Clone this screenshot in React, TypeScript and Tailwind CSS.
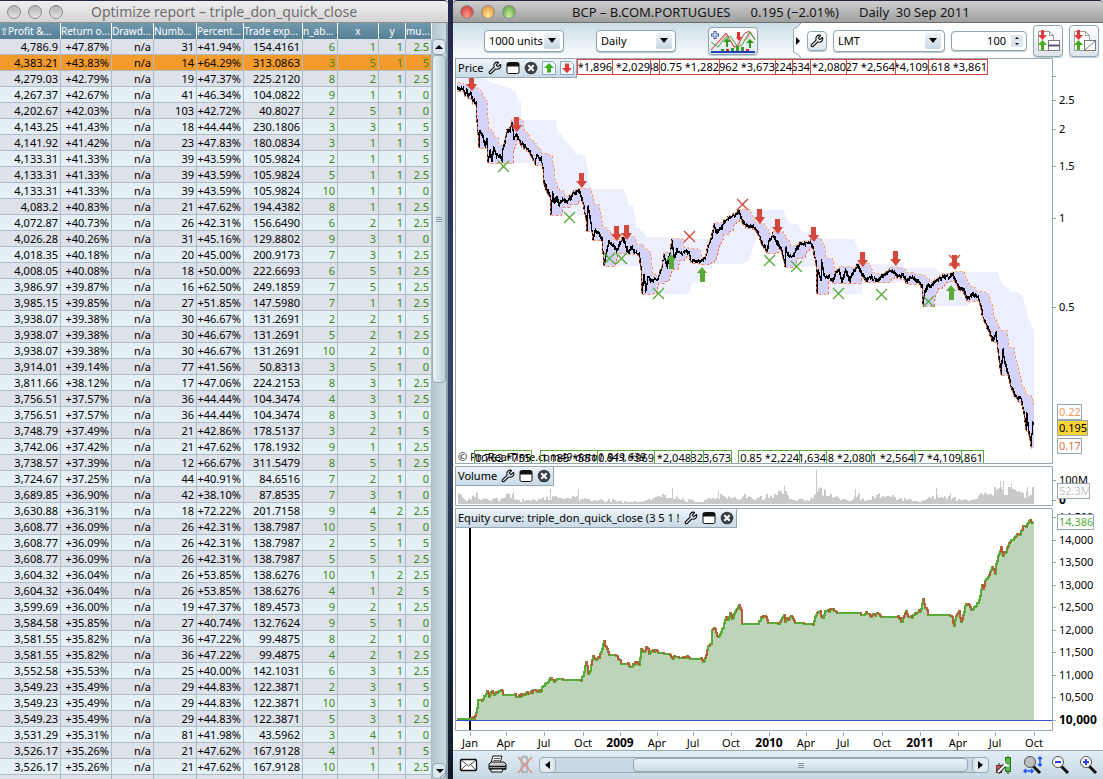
import type { ReactNode } from "react";
import { Wrench } from "lucide-react";

type Point = [number, number];

const COLUMNS = [
  { label: "⇧Profit &...", width: "w-[61px]", header: "text-left" },
  { label: "Return o...", width: "w-[51px]", header: "text-left" },
  { label: "Drawd...", width: "w-[42px]", header: "text-left" },
  { label: "Numb...", width: "w-[43px]", header: "text-left" },
  { label: "Percent...", width: "w-[47px]", header: "text-left" },
  { label: "Trade exp...", width: "w-[59px]", header: "text-left" },
  { label: "n_ab...", width: "w-[35px]", header: "text-left" },
  { label: "x", width: "w-[41px]", header: "text-center" },
  { label: "y", width: "w-[27px]", header: "text-center" },
  { label: "mu...", width: "w-[26px]", header: "text-left" },
];

// profit, return %, trades, winning %, expectancy, n_ab, x, y, mult
const REPORT = `4,786.9 47.87 31 41.94 154.4161 6 1 1 2.5
4,383.21 43.83 14 64.29 313.0863 3 5 1 5
4,279.03 42.79 19 47.37 225.2120 8 2 1 2.5
4,267.37 42.67 41 46.34 104.0822 9 1 1 0
4,202.67 42.03 103 42.72 40.8027 2 5 1 0
4,143.25 41.43 18 44.44 230.1806 3 3 1 5
4,141.92 41.42 23 47.83 180.0834 3 1 1 5
4,133.31 41.33 39 43.59 105.9824 2 1 1 5
4,133.31 41.33 39 43.59 105.9824 5 1 1 2.5
4,133.31 41.33 39 43.59 105.9824 10 1 1 0
4,083.2 40.83 21 47.62 194.4382 8 1 1 2.5
4,072.87 40.73 26 42.31 156.6490 6 2 1 2.5
4,026.28 40.26 31 45.16 129.8802 9 3 1 0
4,018.35 40.18 20 45.00 200.9173 7 3 1 2.5
4,008.05 40.08 18 50.00 222.6693 6 5 1 2.5
3,986.97 39.87 16 62.50 249.1859 7 5 1 2.5
3,985.15 39.85 27 51.85 147.5980 7 1 1 2.5
3,938.07 39.38 30 46.67 131.2691 2 2 1 5
3,938.07 39.38 30 46.67 131.2691 5 2 1 2.5
3,938.07 39.38 30 46.67 131.2691 10 2 1 0
3,914.01 39.14 77 41.56 50.8313 3 5 1 0
3,811.66 38.12 17 47.06 224.2153 8 3 1 2.5
3,756.51 37.57 36 44.44 104.3474 4 3 1 2.5
3,756.51 37.57 36 44.44 104.3474 8 3 1 0
3,748.79 37.49 21 42.86 178.5137 3 2 1 5
3,742.06 37.42 21 47.62 178.1932 9 1 1 2.5
3,738.57 37.39 12 66.67 311.5479 8 5 1 2.5
3,724.67 37.25 44 40.91 84.6516 7 2 1 0
3,689.85 36.90 42 38.10 87.8535 7 3 1 0
3,630.88 36.31 18 72.22 201.7158 9 4 2 2.5
3,608.77 36.09 26 42.31 138.7987 10 5 1 0
3,608.77 36.09 26 42.31 138.7987 2 5 1 5
3,608.77 36.09 26 42.31 138.7987 5 5 1 2.5
3,604.32 36.04 26 53.85 138.6276 10 1 2 2.5
3,604.32 36.04 26 53.85 138.6276 4 1 2 5
3,599.69 36.00 19 47.37 189.4573 9 2 1 2.5
3,584.58 35.85 27 40.74 132.7624 9 5 1 0
3,581.55 35.82 36 47.22 99.4875 8 2 1 0
3,581.55 35.82 36 47.22 99.4875 4 2 1 2.5
3,552.58 35.53 25 40.00 142.1031 6 3 1 2.5
3,549.23 35.49 29 44.83 122.3871 2 3 1 5
3,549.23 35.49 29 44.83 122.3871 10 3 1 0
3,549.23 35.49 29 44.83 122.3871 5 3 1 2.5
3,531.29 35.31 81 41.98 43.5962 3 4 1 0
3,526.17 35.26 21 47.62 167.9128 4 1 1 5
3,526.17 35.26 21 47.62 167.9128 10 1 1 2.5
3,517.28 35.18 28 38.57 125.1484 8 1 1 5`
  .split("\n")
  .map((line) => {
    const [profit, ret, trades, win, exp, ...vars] = line.split(" ");
    return [profit, `+${ret}%`, "n/a", trades, `+${win}%`, exp, ...vars];
  });

const parse = (text: string): Point[] =>
  text
    .trim()
    .split(/\s+/)
    .map((pair) => pair.split(",").map(Number) as Point);

const PRICE = parse(`
410,75 440,79 447,83 457,88 460,89 463,87 465,94 467,90 468,95 471,93 473,100 476,103 477,120 478,132 479,145
480,131 483,137 485,145 487,140 488,161 490,151 492,160 494,148 497,155 500,155 502,160 503,148 505,141 507,132
510,130 512,122 514,138 516,135 520,141 525,146 530,152 535,162 537,155 541,158 543,167 544,181 547,190 550,195
551,212 552,200 553,193 554,202 557,197 559,203 563,199 567,201 570,198 573,193 575,193 579,190 582,198 584,207
586,217 587,230 588,206 591,222 593,237 595,230 598,232 602,239 603,252 604,264 607,250 609,242 613,245 617,250
620,243 623,237 625,242 628,252 632,247 635,252 639,253 641,267 642,290 644,274 646,290 648,277 652,280 655,279
658,278 662,267 664,255 667,265 670,253 672,240 674,257 677,250 680,252 685,252 689,251 691,261 695,261 700,260
705,258 708,246 712,236 714,225 717,232 722,227 725,220 730,217 735,214 739,211 742,219 745,225 750,225 755,228
758,233 762,243 765,247 767,250 769,242 773,234 776,240 781,248 784,259 785,265 786,248 789,256 793,256 796,250
800,243 805,243 810,241 813,247 816,262 817,291 818,270 821,280 822,262 824,275 828,276 833,280 836,273 839,269
842,280 846,270 850,280 854,270 858,265 861,272 866,279 871,277 878,280 883,275 890,270 895,273 900,276 903,273
906,281 911,277 918,280 922,286 923,303 925,292 928,284 931,286 936,280 943,277 950,276 953,274 956,282 960,288
963,287 967,299 973,293 978,297 981,307 983,317 986,323 990,333 993,339 996,333 998,350 1001,373 1003,350 1005,363
1008,373 1011,385 1015,395 1018,398 1021,397 1024,413 1026,428 1027,413 1029,432 1031,445 1033,422`);

const EQUITY = parse(`
457,719 471,719 475,717 477,707 478,700 482,700 485,695 487,691 489,696 492,690 494,695 497,692 501,690 503,695
515,695 518,697 522,695 528,693 535,691 540,692 545,683 548,681 550,678 553,681 558,679 567,680 581,680 583,677
586,662 588,673 590,670 593,657 597,660 599,657 602,648 604,642 607,649 609,655 615,655 618,658 622,664 628,664
631,667 635,663 639,664 641,649 643,653 647,647 649,653 653,650 658,653 670,654 672,659 675,657 683,658 687,656
690,659 701,659 704,662 706,655 708,647 711,643 712,630 714,627 717,636 720,635 723,627 726,618 728,620 730,613
732,619 735,613 737,609 739,606 741,610 742,624 758,624 761,618 763,617 765,616 768,623 778,623 780,622 784,616
785,621 791,617 795,623 813,624 816,615 820,611 822,619 825,612 828,611 833,608 837,613 860,613 862,616 866,613
870,616 879,613 881,617 898,617 902,622 906,610 908,617 911,617 916,613 921,610 923,598 925,608 926,607 928,615
950,615 952,617 954,627 956,615 959,612 961,623 963,616 965,605 968,603 971,610 975,607 979,600 980,595 982,584
983,590 985,582 990,572 992,568 995,573 996,563 999,553 1001,547 1003,555 1006,551 1009,543 1015,537 1018,534
1020,536 1023,526 1026,526 1030,519 1032,523 1034,523`);

const VOLUME = parse(`
458,9 465,4 470,5 476,9 479,7 486,4 500,5 510,9 514,8 517,4 530,4 542,5 552,7 560,5 572,8 580,5 590,4 600,4 612,4
620,2 640,2 648,4 656,7 664,8 676,7 686,4 700,2 706,4 716,8 722,7 732,5 745,7 755,5 765,7 775,9 785,12 789,4 810,4
818,16 826,9 836,6 850,4 858,8 866,4 880,8 890,8 900,5 910,4 916,2 921,3 926,7 944,7 955,5 972,3 980,8 990,10
1000,15 1012,12 1024,9 1034,14`);

const VOLUME_SPIKES: Record<number, number> = {
  477: 11, 513: 12, 550: 15, 578: 15, 672: 16, 718: 13, 784: 18, 816: 35,
  855: 15, 936: 16, 950: 11, 1000: 23, 1003: 23, 1011: 20, 1027: 17,
};

function valueAt(points: Point[], x: number) {
  const i = points.findIndex((p) => p[0] >= x);
  if (i <= 0) return points[i === 0 ? 0 : points.length - 1][1];
  const [x0, y0] = points[i - 1];
  const [x1, y1] = points[i];
  return y0 + ((y1 - y0) * (x - x0)) / (x1 - x0);
}

function noise(n: number) {
  const v = Math.sin(n * 127.1 + 11.7) * 43758.5453;
  return v - Math.floor(v);
}

const FIRST = 410;
const BARS = Array.from({ length: 1034 - FIRST }, (_, i) => {
  const x = FIRST + i;
  const a = valueAt(PRICE, x);
  const b = valueAt(PRICE, x + 1);
  const drift = (noise(x + 300) - 0.5) * 2;
  return {
    x,
    high: Math.round(Math.min(a, b) + drift - noise(x) * 2),
    low: Math.round(Math.max(a, b) + drift + 1 + noise(x + 900) * 2),
  };
});

function channel(period: number) {
  return BARS.slice(457 - FIRST).map((bar) => {
    const span = BARS.filter((b) => b.x > bar.x - period && b.x <= bar.x);
    return {
      x: bar.x,
      top: Math.min(...span.map((b) => b.high)),
      bottom: Math.max(...span.map((b) => b.low)),
    };
  });
}

const INNER = channel(11);
const OUTER = channel(45);

function stepLine(points: Point[]) {
  return points.map(([x, y], i) => (i ? `H${x}V${y}` : `M${x} ${y}`)).join("");
}

function area(rows: { x: number; top: number; bottom: number }[]) {
  return rows.map((r) => `M${r.x} ${r.top}h1V${r.bottom}h-1z`).join("");
}

const EQUITY_STEPS: Point[] = Array.from({ length: 578 }, (_, i) => {
  const x = 457 + i;
  const slope = Math.abs(valueAt(EQUITY, x + 1) - valueAt(EQUITY, x));
  const jitter = slope > 0.2 ? (noise(x) - 0.5) * 3 : 0;
  return [x, Math.round(valueAt(EQUITY, x) + jitter)];
});

const RED = "#d4473a";
const GREEN = "#58ab36";
const AXIS = "#98a8b2";
const CHART_FONT = "Noto Sans, Open Sans, sans-serif";

function Arrow({ x, y, up = false }: { x: number; y: number; up?: boolean }) {
  const d = up
    ? "M0 0l5 6h-2v9h-5v-9h-3z"
    : "M-2 0h5v8h3l-5 7l-6-7h3z";
  return <path d={d} transform={`translate(${x} ${y})`} fill={up ? GREEN : RED} />;
}

function Cross({ x, y, color }: { x: number; y: number; color: string }) {
  return (
    <path
      d={`M${x - 5} ${y - 5}l11 11m0-11l-11 11`}
      stroke={color}
      strokeWidth="1.4"
      fill="none"
    />
  );
}

// Boxed level label, cut off on the left when its text is too long
function Level({ x, y, w, h, text, color }: { x: number; y: number; w: number; h: number; text: string; color: string }) {
  return (
    <svg x={x} y={y} width={w} height={h}>
      <text x={w - 1} y={12} textAnchor="end" fontSize="11">
        {text}
      </text>
      <rect x="0.5" y="0.5" width={w - 1} height={h - 1} fill="none" stroke={color} />
    </svg>
  );
}

function AxisLabel({ y, text, bold = false }: { y: number; text: string; bold?: boolean }) {
  return (
    <>
      <path d={`M1052 ${y}.5h4`} stroke={AXIS} />
      <text x="1059" y={y + 4} fontSize={bold ? 12 : 11} fontWeight={bold ? 700 : 400}>
        {text}
      </text>
    </>
  );
}

function AxisTag({ y, w, text, color, fill = "#fff" }: { y: number; w: number; text: string; color: string; fill?: string }) {
  return (
    <>
      <rect x="1057.5" y={y + 0.5} width={w} height="15" fill={fill} stroke={AXIS} />
      <text x="1059" y={y + 12} fontSize="11" fill={color}>
        {text}
      </text>
    </>
  );
}

const TOP_LEVELS: [number, number, string][] = [
  [577, 36, "*1,896"], [612, 39, "*2,029"], [650, 10, "48"], [659, 61, "0.75 *1,282"],
  [719, 57, "962 *3,673"], [775, 18, "224"], [792, 19, "634"], [810, 37, "*2,080"],
  [846, 50, "27 *2,564"], [895, 34, "*4,109"], [928, 60, ".618 *3,861"],
];

const BOTTOM_LEVELS: [number, number, string][] = [
  [474, 58, "0.762 *755"], [540, 58, "1.185 *551"], [597, 58, "0.911 *969"], [654, 38, "*2,048"],
  [691, 13, "32"], [703, 29, "3,673"], [738, 62, "0.85 *2,224"], [799, 28, "1,634"],
  [826, 46, "58 *2,080"], [871, 44, "1 *2,564"], [914, 48, "17 *4,109"], [961, 23, ",861"],
];

function PriceChart() {
  return (
    <svg viewBox="455 58 648 406" className="block w-full" fontFamily={CHART_FONT}>
      <rect x="455" y="58" width="648" height="406" fill="#fff" />
      <path d={area(OUTER)} fill="#eeeffe" shapeRendering="crispEdges" />
      <path d={area(INNER)} fill="#d2d2fb" shapeRendering="crispEdges" />
      <path
        d={BARS.slice(457 - FIRST)
          .map((b) => `M${b.x} ${b.high}h1V${b.low}h-1z`)
          .join("")}
        fill="#000"
        shapeRendering="crispEdges"
      />
      <path
        d={stepLine(INNER.map((r) => [r.x, r.top]))}
        fill="none"
        stroke="#f09a62"
        strokeDasharray="3 2"
        transform="translate(0.5 -0.5)"
      />
      <path
        d={stepLine(INNER.map((r) => [r.x, r.bottom]))}
        fill="none"
        stroke="#ec6c40"
        strokeDasharray="3 2"
        transform="translate(0.5 0.5)"
      />
      {parse("471,76 516,117 581,173 616,226 626,225 759,209 777,219 813,227 862,252 895,251 954,255").map(([x, y]) => (
        <Arrow key={x} x={x} y={y} />
      ))}
      {parse("671,254 702,267 951,285").map(([x, y]) => (
        <Arrow key={x} x={x} y={y} up />
      ))}
      {parse("503,166 569,217 609,258 621,258 658,293 769,260 796,266 838,293 881,294 928,301").map(([x, y]) => (
        <Cross key={x} x={x} y={y} color={GREEN} />
      ))}
      {parse("689,236 742,204 954,260").map(([x, y]) => (
        <Cross key={x} x={x} y={y} color={RED} />
      ))}
      {TOP_LEVELS.map(([x, w, text]) => (
        <Level key={x} x={x} y={59} w={w} h={16} text={text} color={RED} />
      ))}
      <text x="458" y="461" fontSize="11">
        © ProRealTime.com
      </text>
      <text x="560" y="461" fontSize="11" fontStyle="italic">
        49 data1 849,639
      </text>
      {BOTTOM_LEVELS.map(([x, w, text]) => (
        <Level key={x} x={x} y={450} w={w} h={14} text={text} color={GREEN} />
      ))}
      <path d="M455.5 58.5H1052.5V463.5H455.5z" fill="none" stroke={AXIS} />
      <path d="M1052 76.5h4" stroke={AXIS} />
      <AxisLabel y={100} text="2.5" />
      <AxisLabel y={129} text="2" />
      <AxisLabel y={166} text="1.5" />
      <AxisLabel y={218} text="1" />
      <AxisLabel y={307} text="0.5" />
      <AxisTag y={404} w={24} text="0.22" color="#f09a62" />
      <AxisTag y={438} w={24} text="0.17" color="#ec6c40" />
      <AxisTag y={420} w={30} text="0.195" color="#000" fill="#fbd535" />
    </svg>
  );
}

function VolumeChart() {
  const bars = Array.from({ length: 576 }, (_, i) => {
    const x = 458 + i;
    const base = valueAt(VOLUME, x);
    return [x, Math.round(VOLUME_SPIKES[x] ?? base * (0.6 + noise(Math.floor(x / 2)) * 0.8))];
  });
  return (
    <svg viewBox="455 466 648 40" className="block w-full" fontFamily={CHART_FONT}>
      <rect x="455" y="466" width="648" height="40" fill="#fff" />
      <path
        d={bars.map(([x, h]) => `M${x} 504v-${h}h1v${h}z`).join("")}
        fill="#c9c9c9"
        shapeRendering="crispEdges"
      />
      <path d="M455.5 466.5H1052.5V505.5H455.5z" fill="none" stroke={AXIS} />
      <AxisLabel y={480} text="100M" />
      <AxisLabel y={500} text="0" bold />
      <AxisTag y={483} w={32} text="52.3M" color="#c4c4c4" />
    </svg>
  );
}

const EQUITY_LABELS: [number, string][] = [
  [517, "14,500"], [540, "14,000"], [562, "13,500"], [585, "13,000"], [607, "12,500"],
  [630, "12,000"], [652, "11,500"], [675, "11,000"], [697, "10,500"],
];

const MONTHS: [number, string][] = [
  [470, "Jan"], [506, "Apr"], [544, "Jul"], [583, "Oct"], [620, "2009"], [657, "Apr"],
  [693, "Jul"], [731, "Oct"], [769, "2010"], [806, "Apr"], [843, "Jul"], [882, "Oct"],
  [920, "2011"], [958, "Apr"], [995, "Jul"], [1034, "Oct"],
];

function EquityChart() {
  const fill = `${stepLine(EQUITY_STEPS)}V720H457z`;
  const losing = EQUITY_STEPS.slice(1)
    .map(([x, y], i) => {
      const prev = EQUITY_STEPS[i][1];
      return y > prev || (y !== prev && noise(x + 40) > 0.85) ? `M${x - 1} ${prev}H${x}V${y}` : "";
    })
    .join("");
  return (
    <svg viewBox="455 508 648 242" className="block w-full" fontFamily={CHART_FONT}>
      <rect x="455" y="508" width="648" height="242" fill="#fff" />
      <path d={fill} fill="#bcd4b8" />
      <path d="M470 527V730" stroke="#000" strokeWidth="2" />
      <path d={stepLine(EQUITY_STEPS)} fill="none" stroke={GREEN} strokeWidth="2" />
      <path d={losing} fill="none" stroke={RED} strokeWidth="1.5" />
      <path d="M456 720.5H1052" stroke="#2f4fc8" />
      <path d="M455.5 508.5H1052.5V730.5H455.5z" fill="none" stroke={AXIS} />
      {EQUITY_LABELS.map(([y, text]) => (
        <AxisLabel key={y} y={y} text={text} />
      ))}
      <AxisLabel y={720} text="10,000" bold />
      <AxisTag y={514} w={36} text="14,386" color={GREEN} />
      {MONTHS.map(([x, text]) => {
        const year = text.startsWith("20");
        return (
          <g key={x}>
            <path d={`M${x}.5 732v4`} stroke={AXIS} />
            <text x={x} y="747" textAnchor="middle" fontSize={year ? 12 : 11} fontWeight={year ? 700 : 400}>
              {text}
            </text>
          </g>
        );
      })}
    </svg>
  );
}

function WindowIcon() {
  return (
    <svg width="14" height="14" viewBox="0 0 14 14">
      <rect x="1" y="1.5" width="12" height="11" rx="1.5" fill="#fff" stroke="#111" />
      <path d="M1 2h12v3.5H1z" fill="#111" />
    </svg>
  );
}

function CloseIcon() {
  return (
    <svg width="14" height="14" viewBox="0 0 14 14">
      <circle cx="7" cy="7" r="6.3" fill="#3a3f44" />
      <path d="M4.3 4.3l5.4 5.4m0-5.4l-5.4 5.4" stroke="#fff" strokeWidth="2" />
    </svg>
  );
}

function PageArrowIcon({ up }: { up?: boolean }) {
  return (
    <svg width="14" height="14" viewBox="0 0 14 14">
      <path d="M.5.5h10l3 3v10H.5z" fill="#f4f9fd" stroke="#86a8be" />
      {up ? (
        <path d="M7 2l5 5H9v4.500H5V7H2z" fill="#3fae1e" />
      ) : (
        <path d="M7 12l5-5H9V2.500H5V7H2z" fill="#e23a36" />
      )}
    </svg>
  );
}

function PanelHeader({ title, children }: { title: string; children?: ReactNode }) {
  return (
    <div className="absolute top-0 left-0 flex h-5 items-center gap-1 border border-[#98a8b2] bg-linear-to-b from-[#eef5fa] to-[#c9dae6] px-0.5 text-[11px] leading-4">
      <span className="whitespace-nowrap">{title}</span>
      <button aria-label={`${title} settings`}>
        <Wrench size={14} strokeWidth={1.8} />
      </button>
      <button aria-label={`Detach ${title}`}>
        <WindowIcon />
      </button>
      <button aria-label={`Close ${title}`}>
        <CloseIcon />
      </button>
      {children}
    </div>
  );
}

function TrafficLights({ active = false }: { active?: boolean }) {
  const colors = active
    ? [
        "bg-radial-[at_50%_80%] from-[#ff9c90] to-[#c2292a]",
        "bg-radial-[at_50%_80%] from-[#ffe9a0] to-[#e08a24]",
        "bg-radial-[at_50%_80%] from-[#cdf0a0] to-[#4d9630]",
      ]
    : [
        "bg-linear-to-b from-[#b4b4b4] to-[#e2e2e2]",
        "bg-linear-to-b from-[#b4b4b4] to-[#e2e2e2]",
        "bg-linear-to-b from-[#b4b4b4] to-[#e2e2e2]",
      ];
  return (
    <div className="flex gap-[7px] pl-[7px]">
      {["Close", "Minimize", "Zoom"].map((name, i) => (
        <button
          key={name}
          aria-label={name}
          className={`size-3.5 rounded-full border border-[#8c8c8c] ${colors[i]}`}
        />
      ))}
    </div>
  );
}

function ReportWindow() {
  return (
    <section className="flex min-w-0 flex-[448] flex-col overflow-hidden bg-white font-['Noto_Sans',sans-serif]">
      <header className="flex h-[23px] shrink-0 items-center gap-7 rounded-tr border-t border-t-[#23264a] border-b border-b-[#8e8e8e] bg-linear-to-b from-[#efefef] to-[#d4d4d4]">
        <TrafficLights />
        <h1 className="truncate text-[14px] leading-5 text-[#6e6e6e]">Optimize report – triple_don_quick_close</h1>
      </header>
      <div className="flex min-h-0 flex-1">
        <div className="min-w-0 flex-1 overflow-hidden">
          <table className="w-full table-fixed border-separate border-spacing-0 text-[11px]">
            <colgroup>
              {COLUMNS.map((c) => (
                <col key={c.label} className={c.width} />
              ))}
            </colgroup>
            <thead>
              <tr className="bg-linear-to-b from-[#7199ae] to-[#557f95] text-[10px] text-white">
                {COLUMNS.map((c) => (
                  <th
                    key={c.label}
                    className={`h-4 border-r border-r-white p-0 leading-[14px] font-normal whitespace-nowrap ${c.header}`}
                  >
                    {c.label}
                  </th>
                ))}
              </tr>
            </thead>
            <tbody>
              {REPORT.map((row, r) => (
                <tr
                  key={r}
                  className={r === 1 ? "bg-[#f29a2c]" : r % 2 ? "bg-[#e4f0f6]" : "bg-[#dde1e9]"}
                >
                  {row.map((value, c) => (
                    <td
                      key={c}
                      className={`h-4 border-r border-b border-[#b0bcc5] p-0 pr-0.5 text-right leading-[14px] whitespace-nowrap ${c > 5 ? "text-[#3f8a14]" : "text-black"}`}
                    >
                      {value}
                    </td>
                  ))}
                </tr>
              ))}
            </tbody>
          </table>
        </div>
        <div className="flex w-4 shrink-0 flex-col border-r-2 border-[#8ea0ac] bg-linear-to-r from-[#b4c5cf] to-[#cddbe2] pt-4">
          <button aria-label="Scroll up" className="grid h-4 place-items-center rounded border border-[#98a8b2] bg-[#dce8ef]">
            <svg width="8" height="4" viewBox="0 0 8 4"><path d="M4 0l4 4H0z" /></svg>
          </button>
          <div className="grid flex-[328] place-items-center rounded border border-[#98a8b2] bg-linear-to-r from-[#eaf2f6] to-[#bfd0da]">
            <svg width="6" height="5" viewBox="0 0 6 5"><path d="M0 .5h6M0 2.500h6M0 4.500h6" stroke="#8797a2" /></svg>
          </div>
          <div className="flex-[382]" />
          <button aria-label="Scroll down" className="grid h-4 place-items-center rounded border border-[#98a8b2] bg-[#dce8ef]">
            <svg width="14" height="14" viewBox="0 0 14 14">
              <path d="M3 5h8l-4 4z" />
              <path d="M7 14l7-7M10 14l4-4" stroke="#7b8a94" />
            </svg>
          </button>
        </div>
      </div>
    </section>
  );
}

function Select({ label, value, grow = false }: { label: string; value: string; grow?: boolean }) {
  return (
    <label className={`relative block h-[22px] ${grow ? "w-28" : "w-20"}`}>
      <select
        aria-label={label}
        className="block h-full w-full appearance-none rounded border border-[#8fa5b2] bg-white pl-1 text-[11px] leading-4 shadow-[0_1px_1px_#b9c8d1]"
      >
        <option>{value}</option>
      </select>
      <span className="pointer-events-none absolute top-[3px] right-1 grid size-4 place-items-center rounded-xs bg-linear-to-b from-[#edf4f8] to-[#c8d9e3]">
        <svg width="8" height="5" viewBox="0 0 8 5"><path d="M0 0h8L4 5z" /></svg>
      </span>
    </label>
  );
}

function IndicatorsIcon() {
  return (
    <svg width="46" height="24" viewBox="0 0 46 24">
      <path d="M3 18L16 4l3 3-7 5zM20 9l5 9 6-5-2 6h-5zM32 13l6-10 4 0-3 7z" fill="#f3c4c4" />
      <path d="M1 21L16 4l8 14 4-2 6-11 5-3 6 8" fill="none" stroke="#cf3b3b" />
      <path d="M1 13l7 5 7-9 5-2 8 11 4-2 8-13 5 8" fill="none" stroke="#3fae3a" />
      <path d="M5 2v8M1 6h8" stroke="#3c66b8" strokeWidth="3" />
      <path d="M5 3v6M2 6h6" stroke="#fff" />
      <path d="M17 9l4 4h-3v5h-2v-5h-3zM40 10l4 4h-3v5h-2v-5h-3z" fill="#2e9c1c" />
      <path d="M27 3h3v5h2l-3 4-3-4h1z" fill="#e0302c" />
      <path d="M11 20h3v3h-3zM21 19h3v4h-3zM26 17h3v6h-3zM31 18h3v5h-3z" fill="#3a9b2a" />
      <path d="M16 20h3v3h-3zM36 20h3v3h-3z" fill="#c92f2f" />
      <path d="M1 23h44" stroke="#2340b8" strokeWidth="2" />
    </svg>
  );
}

function OrderIcon({ slash = false }: { slash?: boolean }) {
  return (
    <svg width="24" height="24" viewBox="0 0 24 24">
      <path d="M2.500 2.500h11l4 4v15h-15z" fill="#fff" stroke="#9a9a9a" />
      <path d="M13.500 2.500v4h4" fill="none" stroke="#9a9a9a" />
      <path d="M5 1h3v5h3l-4.500 5L2 6h3z" fill="#e23a36" />
      <path d="M6.500 11l4.500 5H8v5H5v-5H2z" fill="#3fae1e" />
      <rect x="12.500" y="11.500" width="11" height="10" fill="#fff" stroke="#777" />
      {slash ? <path d="M13 21l10-9" stroke="#777" /> : <path d="M12 16.500h11" stroke="#557" strokeWidth="2" />}
    </svg>
  );
}

const raised = "grid place-items-center rounded border border-[#8fa5b2] bg-linear-to-b from-white to-[#dde5ea] shadow-[0_1px_1px_#b9c8d1]";

function Toolbar() {
  return (
    <div className="flex h-[35px] items-stretch justify-between bg-linear-to-b from-[#ccdde6] to-[#fbfdfe]">
      <div className="flex items-center gap-8 pl-[31px]">
        <Select label="Displayed units" value="1000 units" />
        <Select label="Timeframe" value="Daily" />
        <button aria-label="Add indicator" className={`h-7 w-[50px] ${raised}`}>
          <IndicatorsIcon />
        </button>
      </div>
      <div className="flex items-center bg-linear-to-b">
        <svg width="8" height="35" viewBox="0 0 8 35">
          <path d="M8 0Q6 4 0 6v23q6 2 8 6z" fill="#fff" />
          <path d="M8 0Q6 4 .5 6v23q5.500 2 7.500 6" fill="none" stroke="#98a8b2" />
          <path d="M3 14v8l4-4z" />
        </svg>
        <div className="flex h-full items-center gap-1.5 bg-white pr-1 pl-1.5">
          <button aria-label="Trading settings" className={`size-5 ${raised}`}>
            <Wrench size={14} strokeWidth={1.8} />
          </button>
          <Select label="Order type" value="LMT" grow />
          <label className="relative block h-5 w-[76px]">
            <input
              aria-label="Quantity"
              defaultValue="100"
              className="block h-full w-full rounded border border-[#8fa5b2] bg-white pr-5 text-right text-[11px] shadow-[0_1px_1px_#b9c8d1]"
            />
            <svg width="12" height="12" viewBox="0 0 12 12" className="pointer-events-none absolute top-1 right-1">
              <rect width="12" height="12" fill="#dce7ee" />
              <path d="M4 4h4L6 2zM4 8h4l-2 2z" />
            </svg>
          </label>
          <button aria-label="Close position" className={`h-8 w-[30px] ${raised}`}>
            <OrderIcon />
          </button>
          <button aria-label="Cancel orders" className={`h-8 w-[30px] ${raised}`}>
            <OrderIcon slash />
          </button>
        </div>
      </div>
    </div>
  );
}

function MagnifierIcon({ sign }: { sign: "fit" | "-" | "+" }) {
  return (
    <svg width="20" height="20" viewBox="0 0 20 20">
      <path d="M10 11l7 7" stroke="#111" strokeWidth="3" />
      <circle cx="7" cy="7" r="5.500" fill={sign === "fit" ? "#bcbcbc" : "#fff"} stroke="#555" />
      {sign === "fit" ? (
        <path d="M17 2v8M15 4l2-2 2 2M15 9l2 2 2-2M1 16h8M3 14l-2 2 2 2M8 14l2 2-2 2" fill="none" stroke="#1f55f0" strokeWidth="1.500" />
      ) : (
        <path d={sign === "+" ? "M4 7h6M7 4v6" : "M4 7h6"} stroke="#1f3ff0" strokeWidth="2" />
      )}
    </svg>
  );
}

function StatusBar() {
  return (
    <footer className="flex min-h-[29px] items-center border-t border-[#98a8b2] bg-linear-to-b from-[#e2eef6] to-[#c6d7e2] pr-1 pl-1.5">
      <div className="flex gap-2 pr-1">
        <button aria-label="Send by mail">
          <svg width="20" height="20" viewBox="0 0 20 20">
            <rect x="1.500" y="4.500" width="16" height="11" rx="1" fill="#fff" stroke="#111" strokeWidth="1.300" />
            <path d="M2 5l7.500 6L17 5M2 15l5-5M17 15l-5-5" fill="none" stroke="#111" strokeWidth=".8" />
          </svg>
        </button>
        <button aria-label="Print">
          <svg width="20" height="20" viewBox="0 0 20 20">
            <path d="M6 1h9l-2 7H4z" fill="#fff" stroke="#111" />
            <path d="M7 3.500h6M6.500 5.500h6" stroke="#333" strokeWidth=".8" />
            <path d="M2 9l2-2h13l2 2v5H2z" fill="#ccc" stroke="#111" />
            <path d="M2 11.500h17M2 14h17" stroke="#111" strokeWidth="1.300" />
            <path d="M4 14h12l-1 3H4z" fill="#eee" stroke="#111" />
          </svg>
        </button>
        <button aria-label="Link windows" disabled>
          <svg width="20" height="20" viewBox="0 0 20 20">
            <rect x="6.500" y="1.500" width="6" height="8" rx="3" fill="none" stroke="#a7b4bd" strokeWidth="2" />
            <rect x="6.500" y="9.500" width="6" height="8" rx="3" fill="none" stroke="#a7b4bd" strokeWidth="2" />
            <path d="M3 2l14 16M17 2L3 18" stroke="#e0918f" strokeWidth="1.500" />
          </svg>
        </button>
      </div>
      <div className="flex h-4 min-w-0 flex-1 rounded border border-[#98a8b2] bg-[#c9d8e2]">
        <button aria-label="Scroll left" className="grid w-4 place-items-center rounded border-r border-[#98a8b2] bg-[#dfeaf1]">
          <svg width="5" height="8" viewBox="0 0 5 8"><path d="M5 0v8L0 4z" /></svg>
        </button>
        <div className="flex-[78]" />
        <div className="grid flex-[336] place-items-center rounded border border-[#98a8b2] bg-linear-to-b from-[#eaf3f9] to-[#cbdbe5]">
          <svg width="6" height="5" viewBox="0 0 6 5"><path d="M0 .5h6M0 2.500h6M0 4.500h6" stroke="#8797a2" /></svg>
        </div>
        <button aria-label="Scroll right" className="ml-1 grid w-4 place-items-center rounded border-l border-[#98a8b2] bg-[#dfeaf1]">
          <svg width="5" height="8" viewBox="0 0 5 8"><path d="M0 0v8l5-4z" /></svg>
        </button>
      </div>
      <div className="flex gap-2 pl-1.5">
        <button aria-label="Chart settings">
          <svg width="20" height="20" viewBox="0 0 20 20">
            <path d="M4 8v11M13 1v18" stroke="#222" />
            <rect x="1.500" y="10.500" width="5" height="7" fill="#d65a56" stroke="#7a2422" />
            <rect x="10.500" y="2.500" width="5" height="14" fill="#5fb34c" stroke="#2f7a20" />
            <path d="M3 17l7-7" stroke="#222" strokeWidth="4" />
            <path d="M3 17l8-8M9 6l1 4 4 1" fill="none" stroke="#fff" strokeWidth="2.200" />
          </svg>
        </button>
        <button aria-label="Fit to window"><MagnifierIcon sign="fit" /></button>
        <button aria-label="Zoom out"><MagnifierIcon sign="-" /></button>
        <button aria-label="Zoom in"><MagnifierIcon sign="+" /></button>
      </div>
    </footer>
  );
}

function ChartWindow() {
  return (
    <section className="flex min-w-0 flex-[650] flex-col bg-white font-['Noto_Sans',sans-serif] text-black">
      <header className="flex h-[23px] shrink-0 items-center gap-14 rounded-t border-t border-t-[#23264a] border-b border-b-[#6d6d6d] bg-linear-to-b from-[#cfcfcf] to-[#9f9f9f]">
        <TrafficLights active />
        <h1 className="flex gap-5 truncate text-[13px] leading-5 text-[#151515]">
          <span>BCP – B.COM.PORTUGUES</span>
          <span>0.195 (−2.01%)</span>
          <span>Daily&nbsp; 30 Sep 2011</span>
        </h1>
      </header>
      <Toolbar />
      <div className="flex flex-col gap-0.5 pl-0.5">
        <div className="relative">
          <PriceChart />
          <PanelHeader title="Price">
            <button aria-label="Buy markers"><PageArrowIcon up /></button>
            <button aria-label="Sell markers"><PageArrowIcon /></button>
          </PanelHeader>
        </div>
        <div className="relative">
          <VolumeChart />
          <PanelHeader title="Volume" />
        </div>
        <div className="relative">
          <EquityChart />
          <PanelHeader title="Equity curve: triple_don_quick_close (3 5 1 !" />
        </div>
      </div>
      <StatusBar />
    </section>
  );
}

export default function App() {
  return (
    <main className="flex h-screen gap-[5px] overflow-hidden bg-linear-to-b from-[#23264a] via-[#39466b] to-[#0f1a28]">
      <ReportWindow />
      <ChartWindow />
    </main>
  );
}
